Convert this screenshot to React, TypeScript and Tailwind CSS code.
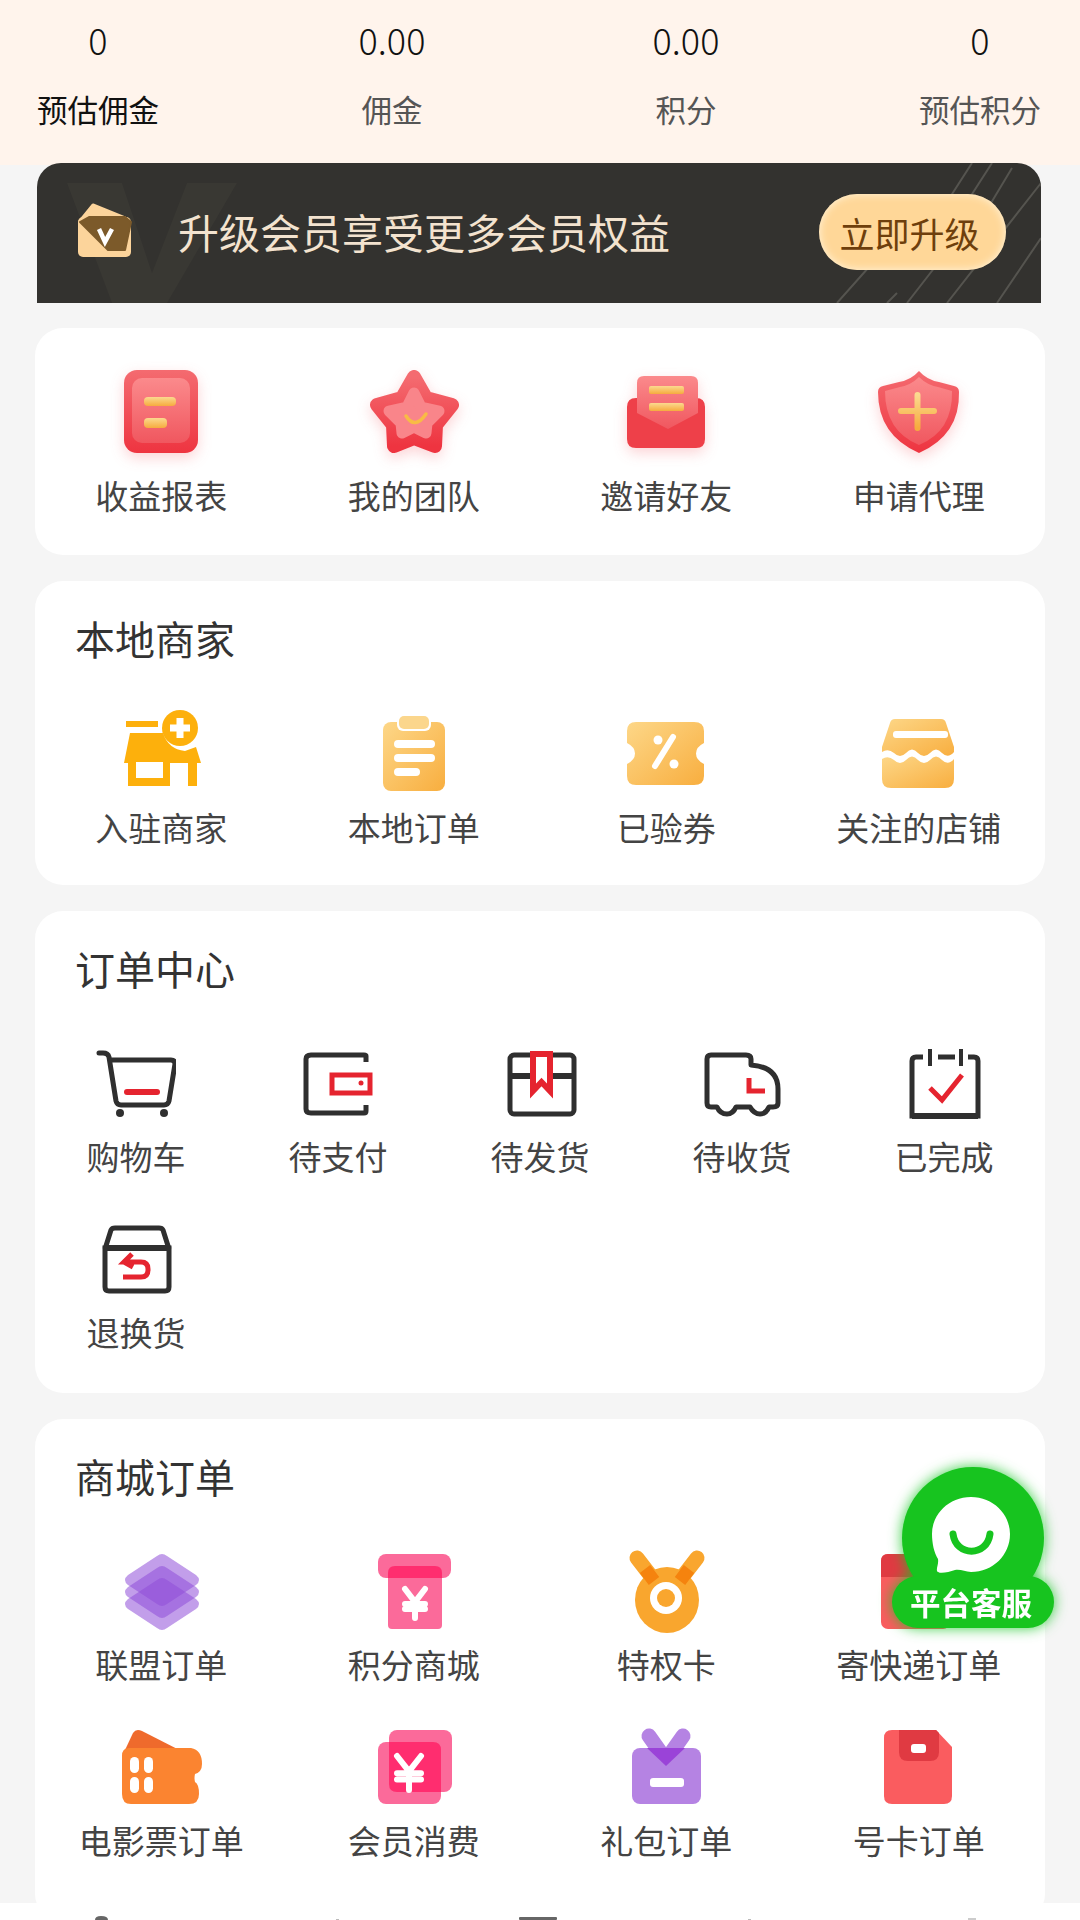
import type { ReactNode } from 'react';

function Svg({ size = 100, className = '', children }: { size?: number; className?: string; children: ReactNode }) {
  return (
    <svg width={size} height={size} viewBox={`0 0 ${size} ${size}`} fill="none" className={className}>
      {children}
    </svg>
  );
}

const redGlow = 'drop-shadow-[0_5px_7px_rgba(240,60,70,0.22)]';

// shared gradients, referenced by id from every icon
function Defs() {
  return (
    <svg width="0" height="0" className="absolute">
      <defs>
        <linearGradient id="redOuter" x1="0" y1="0" x2="0" y2="1">
          <stop offset="0" stopColor="#f46b70" />
          <stop offset="1" stopColor="#ee3440" />
        </linearGradient>
        <linearGradient id="redInner" x1="0" y1="0" x2="0" y2="1">
          <stop offset="0" stopColor="#fb8a8c" />
          <stop offset="1" stopColor="#f0575f" />
        </linearGradient>
        <linearGradient id="goldBar" x1="0" y1="0" x2="0" y2="1">
          <stop offset="0" stopColor="#fbd98f" />
          <stop offset="1" stopColor="#f6ab3e" />
        </linearGradient>
        <linearGradient id="amber" x1="0" y1="0" x2="1" y2="1">
          <stop offset="0" stopColor="#fdd788" />
          <stop offset="1" stopColor="#f8ae3f" />
        </linearGradient>
      </defs>
    </svg>
  );
}

function ReportIcon() {
  return (
    <Svg className={redGlow}>
      <rect x="13" y="3" width="74" height="83" rx="13" fill="url(#redOuter)" />
      <rect x="21" y="11" width="58" height="65" rx="10" fill="url(#redInner)" />
      <rect x="33" y="30" width="32" height="9" rx="4" fill="url(#goldBar)" />
      <rect x="33" y="51" width="23" height="10" rx="4" fill="url(#goldBar)" />
    </Svg>
  );
}

function StarIcon() {
  return (
    <Svg className={redGlow}>
      <path d="M50 10L62 31L88 38L72 58L71 79L50 71L30 79L29 58L13 38L38 31Z" fill="url(#redOuter)" stroke="url(#redOuter)" strokeWidth="14" strokeLinejoin="round" />
      <path d="M50 26L57 40L75 44L63 56L62 66L50 60L38 66L37 56L25 44L43 40Z" fill="#f9858a" stroke="#f9858a" strokeWidth="11" strokeLinejoin="round" />
      <path d="M42 49Q51 63 62 47" stroke="#f8bb45" strokeWidth="3.500" strokeLinecap="round" />
    </Svg>
  );
}

function InviteIcon() {
  return (
    <Svg className={redGlow}>
      <path d="M11 40Q11 31 20 31H80Q89 31 89 40V72Q89 81 80 81H20Q11 81 11 72Z" fill="#ee4049" />
      <path d="M21 16Q21 9 28 9H75Q82 9 82 16V46L52 62L21 46Z" fill="url(#redInner)" />
      <rect x="33" y="19" width="35" height="8" rx="2" fill="url(#goldBar)" />
      <rect x="33" y="36" width="35" height="8" rx="2" fill="url(#goldBar)" />
    </Svg>
  );
}

function ShieldIcon() {
  return (
    <Svg className={redGlow}>
      <path d="M50 4Q58 13 70 15L85 19Q90 20 90 25Q91 68 50 86Q9 68 9 25Q9 20 14 19L30 15Q42 13 50 4Z" fill="url(#redOuter)" />
      <path d="M50 10Q58 18 69 20L83 24Q84 64 50 78Q16 64 16 24L31 20Q42 18 50 10Z" fill="url(#redInner)" />
      <path d="M48.500 28V61M32 44H65" stroke="url(#goldBar)" strokeWidth="6" strokeLinecap="round" />
    </Svg>
  );
}

function ShopIcon() {
  return (
    <Svg>
      <rect x="15" y="22" width="32" height="6" fill="#fdb00c" />
      <path d="M19 34H52Q57 50 74 52L85 48L90 64H13Z" fill="#fdb00c" />
      <path d="M17 64H59V87H17Z" fill="#fdb00c" />
      <rect x="25" y="63" width="27" height="16" fill="#fff" />
      <rect x="77" y="63" width="9" height="24" fill="#fdb00c" />
      <circle cx="69" cy="29" r="18" fill="#fdb00c" />
      <path d="M69 19V39M59 29H79" stroke="#fff" strokeWidth="7" />
    </Svg>
  );
}

function ClipIcon() {
  return (
    <Svg>
      <rect x="19" y="23" width="62" height="69" rx="8" fill="url(#amber)" />
      <rect x="33" y="15" width="34" height="17" rx="6" fill="#fff" />
      <rect x="35" y="17" width="30" height="13" rx="5" fill="#fbd68c" />
      <rect x="30" y="41" width="41" height="8" rx="4" fill="#fff" />
      <rect x="30" y="55" width="41" height="8" rx="4" fill="#fff" />
      <rect x="30" y="69" width="26" height="8" rx="4" fill="#fff" />
    </Svg>
  );
}

function CouponIcon() {
  return (
    <Svg>
      <path d="M20 23H78Q88 23 88 32V44Q80 48 80 54.500Q80 61 88 65V77Q88 86 78 86H20Q11 86 11 77V65Q19 61 19 54.500Q19 48 11 44V32Q11 23 20 23Z" fill="url(#amber)" />
      <path d="M57 38L39 67" stroke="#fff" strokeWidth="6" strokeLinecap="round" />
      <circle cx="42" cy="41" r="4.500" fill="#fff" />
      <circle cx="58" cy="65" r="4.500" fill="#fff" />
    </Svg>
  );
}

function StoreIcon() {
  return (
    <Svg>
      <path d="M26 20H72Q76 20 77 24L85 48V53Q79 60 73 54Q67 47 61 54Q55 60 49 54Q43 47 37 54Q31 60 25 54Q19 49 13 53V48L21 24Q22 20 26 20Z" fill="url(#amber)" />
      <path d="M13 60Q19 56 25 61Q31 67 37 61Q43 54 49 61Q55 67 61 61Q67 54 73 61Q79 67 85 60V80Q85 89 76 89H22Q13 89 13 80Z" fill="url(#amber)" />
      <rect x="24" y="32" width="55" height="7" rx="3" fill="#fff" />
    </Svg>
  );
}

const dark = '#2f2f2f';
const red = '#e5242f';

function CartIcon() {
  return (
    <Svg size={80}>
      <path d="M3 8H7Q12 8 13 12L20 56Q21 60 25 60H68Q72 60 73 56L79 19Q79 15 75 15H14" stroke={dark} strokeWidth="5" strokeLinecap="round" />
      <circle cx="24" cy="68" r="4" fill={dark} />
      <circle cx="68" cy="68" r="4" fill={dark} />
      <path d="M31 47H61" stroke={red} strokeWidth="6" strokeLinecap="round" />
    </Svg>
  );
}

function WalletIcon() {
  return (
    <Svg size={80}>
      <path d="M68 17V11Q68 10 66 10H13Q8 10 8 14V64Q8 68 13 68H66Q68 68 68 66V60" stroke={dark} strokeWidth="5" />
      <rect x="34" y="30" width="38" height="18" stroke={red} strokeWidth="5" />
      <circle cx="63" cy="38" r="2.500" fill={red} />
    </Svg>
  );
}

function PackageIcon() {
  return (
    <Svg size={80}>
      <rect x="10" y="10" width="64" height="59" rx="4" stroke={dark} strokeWidth="5" />
      <path d="M10 31H74" stroke={dark} strokeWidth="6" />
      <path d="M33 9H50V46L41.500 37L33 46Z" fill="#fff" stroke={red} strokeWidth="6" />
    </Svg>
  );
}

function TruckIcon() {
  return (
    <Svg size={80}>
      <path d="M5 14Q5 10 9 10H44Q49 10 49 14V20Q76 22 76 44V58Q76 62 71 62H67Q64 69 58 69Q52 69 48 62H34Q31 69 25 69Q18 69 15 62H9Q5 62 5 58Z" stroke={dark} strokeWidth="5" strokeLinejoin="round" />
      <path d="M47 33V46H63" stroke={red} strokeWidth="5" />
    </Svg>
  );
}

function CalendarIcon() {
  return (
    <Svg size={80}>
      <path d="M19 12H12Q8 12 8 16V71H74V16Q74 12 70 12H64" stroke={dark} strokeWidth="5" />
      <path d="M8 71H74" stroke={dark} strokeWidth="6" />
      <path d="M26 4V21M57 4V21" stroke={dark} strokeWidth="4" />
      <path d="M34 12H51" stroke={dark} strokeWidth="5" />
      <path d="M26 43L38 55L58 30" stroke={red} strokeWidth="5" />
    </Svg>
  );
}

function ReturnIcon() {
  return (
    <Svg size={80}>
      <path d="M9 28L15 9Q16 7 19 7H63Q66 7 67 9L73 28" stroke={dark} strokeWidth="5" strokeLinejoin="round" />
      <path d="M9 27H73V66Q73 70 69 70H13Q9 70 9 66Z" stroke={dark} strokeWidth="5" />
      <path d="M8 27H74" stroke={dark} strokeWidth="6" />
      <path d="M36 33L28 41H45Q52 41 52 48V49Q52 56 45 56H27M28 41L37 46" stroke={red} strokeWidth="5" />
    </Svg>
  );
}

function LayersIcon() {
  return (
    <Svg>
      {[38, 50, 62].map((cy) => (
        <path
          key={cy}
          d={`M46 ${cy - 24}Q51 ${cy - 28} 56 ${cy - 24}L85 ${cy - 5}Q91 ${cy} 85 ${cy + 5}L56 ${cy + 24}Q51 ${cy + 28} 46 ${cy + 24}L17 ${cy + 5}Q11 ${cy} 17 ${cy - 5}Z`}
          fill="#8f4fd9"
          fillOpacity="0.55"
        />
      ))}
    </Svg>
  );
}

function YenLines({ x, y, w, h }: { x: number; y: number; w: number; h: number }) {
  const cx = x + w / 2;
  const mid = y + h * 0.45;
  return (
    <path
      d={`M${x} ${y}L${cx} ${mid}L${x + w} ${y}M${cx} ${mid}V${y + h}M${x} ${mid + 2}H${x + w}M${x} ${mid + h * 0.24}H${x + w}`}
      stroke="#fff"
      strokeWidth="6"
      strokeLinecap="round"
    />
  );
}

function PointsShopIcon() {
  return (
    <Svg>
      <rect x="24" y="30" width="54" height="57" rx="4" fill="#fb6a9a" />
      <rect x="14" y="12" width="73" height="24" rx="8" fill="#fb6a9a" />
      <path d="M24 36V31Q24 24 31 24H71Q78 24 78 31V36Z" fill="#ff2d6f" />
      <YenLines x={41} y={47} w={20} h={29} />
    </Svg>
  );
}

function MedalIcon() {
  return (
    <Svg>
      <path d="M21 16L38 38M81 16L64 38" stroke="#f9a62e" strokeWidth="15" strokeLinecap="round" />
      <ellipse cx="51" cy="58" rx="32" ry="33" fill="#f9a62e" />
      <path d="M29 27L38 39M73 27L64 39" stroke="#f5830e" strokeWidth="13" />
      <circle cx="50" cy="56" r="16" fill="#fff" />
      <circle cx="50" cy="56" r="9" fill="#f9a62e" />
    </Svg>
  );
}

function ExpressIcon() {
  return (
    <Svg>
      <rect x="12" y="12" width="69" height="75" rx="7" fill="#fa5c5f" />
      <path d="M12 35V19Q12 12 19 12H50Q55 12 58 20L65 35Z" fill="#e03a42" />
    </Svg>
  );
}

function TicketIcon() {
  return (
    <Svg>
      <path d="M14 32L22 15Q25 10 31 13L84 40H14Z" fill="#ef6a2c" />
      <path d="M18 30H80Q91 32 91 46Q91 54 84 56Q83 60 84 64Q88 66 88 76Q88 86 78 86H20Q11 86 11 76V38Q11 30 18 30Z" fill="#fb8430" />
      {[19, 33].map((x) => (
        <g key={x}>
          <rect x={x} y="39" width="9" height="16" rx="4.500" fill="#fff" />
          <rect x={x} y="59" width="9" height="16" rx="4.500" fill="#fff" />
        </g>
      ))}
    </Svg>
  );
}

function MemberIcon() {
  return (
    <Svg>
      <rect x="25" y="12" width="63" height="62" rx="8" fill="#fb6a9a" />
      <rect x="14" y="24" width="63" height="62" rx="8" fill="#fb6a9a" />
      <path d="M25 24H69Q77 24 77 32V74H33Q25 74 25 66Z" fill="#ff2d6f" />
      <YenLines x={33} y={38} w={24} h={34} />
    </Svg>
  );
}

function GiftIcon() {
  return (
    <Svg>
      <path d="M33 18L50 42L67 18" stroke="#b583e3" strokeWidth="15" strokeLinecap="round" strokeLinejoin="round" />
      <rect x="16" y="30" width="69" height="56" rx="8" fill="#b583e3" />
      <path d="M31 30H69L50 48Z" fill="#9a43d8" />
      <rect x="34" y="60" width="34" height="9" rx="3" fill="#fff" />
    </Svg>
  );
}

function SimIcon() {
  return (
    <Svg>
      <path d="M23 12H67L83 29V78Q83 86 75 86H23Q15 86 15 78V20Q15 12 23 12Z" fill="#fa5c5f" />
      <path d="M30 12H67L70 15V34Q70 43 61 43H39Q30 43 30 34Z" fill="#e03a42" />
      <rect x="42" y="26" width="15" height="9" rx="3" fill="#fff" />
    </Svg>
  );
}

function Tile({ icon, label, size = 100, gap }: { icon: ReactNode; label: string; size?: number; gap: string }) {
  return (
    <div className={`flex flex-col items-center ${gap}`}>
      <div style={{ width: size, height: size }}>{icon}</div>
      <span className="text-[33px] leading-[44px] text-[#444] whitespace-nowrap">{label}</span>
    </div>
  );
}

function Card({ title, className = '', children }: { title?: string; className?: string; children: ReactNode }) {
  return (
    <section className={`ml-[35px] mr-[35px] bg-white rounded-[28px] ${className}`}>
      {title && <h2 className="pl-[40px] text-[40px] leading-[56px] font-normal text-[#333]">{title}</h2>}
      {children}
    </section>
  );
}

const stats = [
  { value: '0', label: '预估佣金', active: true },
  { value: '0.00', label: '佣金' },
  { value: '0.00', label: '积分' },
  { value: '0', label: '预估积分' },
];

const earnings = [
  { label: '收益报表', icon: <ReportIcon /> },
  { label: '我的团队', icon: <StarIcon /> },
  { label: '邀请好友', icon: <InviteIcon /> },
  { label: '申请代理', icon: <ShieldIcon /> },
];

const local = [
  { label: '入驻商家', icon: <ShopIcon /> },
  { label: '本地订单', icon: <ClipIcon /> },
  { label: '已验券', icon: <CouponIcon /> },
  { label: '关注的店铺', icon: <StoreIcon /> },
];

const orders = [
  { label: '购物车', icon: <CartIcon /> },
  { label: '待支付', icon: <WalletIcon /> },
  { label: '待发货', icon: <PackageIcon /> },
  { label: '待收货', icon: <TruckIcon /> },
  { label: '已完成', icon: <CalendarIcon /> },
  { label: '退换货', icon: <ReturnIcon /> },
];

const mall = [
  { label: '联盟订单', icon: <LayersIcon /> },
  { label: '积分商城', icon: <PointsShopIcon /> },
  { label: '特权卡', icon: <MedalIcon /> },
  { label: '寄快递订单', icon: <ExpressIcon /> },
  { label: '电影票订单', icon: <TicketIcon /> },
  { label: '会员消费', icon: <MemberIcon /> },
  { label: '礼包订单', icon: <GiftIcon /> },
  { label: '号卡订单', icon: <SimIcon /> },
];

export default function App() {
  return (
    <div className="relative w-[1080px] h-[1920px] overflow-hidden bg-[#f5f5f5] font-['Noto_Sans_CJK_SC','Noto_Sans',sans-serif]">
      <Defs />

      {/* Stats */}
      <div className="h-[165px] bg-[#fff4ec] pl-[37px] pr-[39px] pt-[13px] flex justify-between">
        {stats.map((s) => (
          <div key={s.label} className="w-[122px] flex flex-col items-center">
            <span className="text-[36px] leading-[52px] font-light text-[#111]">{s.value}</span>
            <span className={`mt-[22px] text-[30.500px] leading-[44px] whitespace-nowrap ${s.active ? 'text-[#111]' : 'text-[#555]'}`}>{s.label}</span>
          </div>
        ))}
      </div>

      {/* Upgrade banner */}
      <div className="relative -mt-[2px] ml-[37px] mr-[39px] h-[140px] rounded-t-[24px] bg-[#33322f] overflow-hidden flex items-center">
        <svg width="1004" height="140" viewBox="0 0 1004 140" fill="none" className="absolute inset-0">
          <path d="M30 20H85L115 110L150 20H200L130 140H75Z" fill="#393833" />
          <g stroke="#55544f" strokeWidth="2">
            <path d="M935 0L890 70M955 0L910 70M975 5L930 80M1004 20L910 140M1004 75L960 140M860 130L850 140M905 95L870 140M840 95L800 140" />
          </g>
        </svg>
        <svg width="60" height="60" viewBox="0 0 60 60" fill="none" className="relative ml-[38px] shrink-0">
          <path d="M18 2L50 15L30 30L5 18Z" fill="#fcd49b" stroke="#fcd49b" strokeWidth="3" strokeLinejoin="round" />
          <rect x="3" y="14" width="53" height="40" rx="5" fill="#fcd49b" />
          <path d="M14 14H50L56 19L50 47H33L5 19Z" fill="#7c5a2a" stroke="#7c5a2a" strokeWidth="2" strokeLinejoin="round" />
          <path d="M24 26L30 39L37 26" stroke="#fff" strokeWidth="4.500" />
        </svg>
        <span className="relative -top-[2px] ml-[43px] text-[41px] leading-[56px] text-[#f3e3cf]">升级会员享受更多会员权益</span>
        <button className="absolute left-[782px] top-[31px] w-[187px] h-[76px] pr-[6px] rounded-full bg-[#ffd798] shadow-[inset_0_0_8px_#fff5e0] text-[35px] leading-none text-[#6e3f0c]">
          立即升级
        </button>
      </div>

      <Card className="mt-[25px] pt-[39px] pb-[38px] grid grid-cols-4">
        {earnings.map((t) => (
          <Tile key={t.label} icon={t.icon} label={t.label} gap="gap-[6px]" />
        ))}
      </Card>

      <Card title="本地商家" className="mt-[26px] pt-[29px] pb-[36px]">
        <div className="mt-[33px] grid grid-cols-4">
          {local.map((t) => (
            <Tile key={t.label} icon={t.icon} label={t.label} gap="gap-[6px]" />
          ))}
        </div>
      </Card>

      <Card title="订单中心" className="mt-[26px] pt-[29px] pb-[39px]">
        <div className="mt-[49px] grid grid-cols-5 gap-y-[43px]">
          {orders.map((t) => (
            <Tile key={t.label} icon={t.icon} label={t.label} size={80} gap="gap-[9px]" />
          ))}
        </div>
      </Card>

      <Card title="商城订单" className="mt-[26px] pt-[29px] pb-[60px]">
        <div className="mt-[38px] grid grid-cols-4 gap-y-[32px]">
          {mall.map((t) => (
            <Tile key={t.label} icon={t.icon} label={t.label} gap="gap-0" />
          ))}
        </div>
      </Card>

      {/* Tab bar, only the tips of its icons show above the fold */}
      <div className="absolute left-0 right-0 bottom-0 h-[17px] bg-white">
        <svg width="1080" height="17" viewBox="0 0 1080 17" fill="none" className="absolute inset-0">
          <path d="M95 17Q95 13 101 13Q108 13 108 17Z" fill="#666" />
          <rect x="519" y="14" width="38" height="3" rx="1" fill="#666" />
          <rect x="336" y="16" width="3" height="1" fill="#bbb" />
          <rect x="748" y="16" width="3" height="1" fill="#bbb" />
          <rect x="968" y="15" width="8" height="2" fill="#ccc" />
        </svg>
      </div>

      {/* Floating support button */}
      <div className="absolute left-[892px] top-[1467px] w-[162px] h-[161px] drop-shadow-[0_0_7px_rgba(20,196,34,0.85)]">
        <div className="absolute left-[10px] top-0 w-[142px] h-[142px] rounded-full bg-[#17c41f]" />
        <div className="absolute left-0 top-[109px] w-[162px] h-[52px] pr-[4px] rounded-full bg-[#17c41f] flex items-center justify-center text-[30.500px] leading-none font-bold text-white whitespace-nowrap">
          平台客服
        </div>
        <svg width="90" height="90" viewBox="0 0 90 90" fill="none" className="absolute left-[35px] top-[26px]">
          <path d="M44 4C66 4 83 21 83 41C83 62 66 79 44 79C38 79 34 76 28 77C22 79 14 81 11 79C8 77 12 72 11 66C7 60 5 50 5 41C5 21 22 4 44 4Z" fill="#fff" />
          <path d="M26 41C29 64 60 64 63 41" stroke="#17c41f" strokeWidth="7" strokeLinecap="round" />
        </svg>
      </div>
    </div>
  );
}
